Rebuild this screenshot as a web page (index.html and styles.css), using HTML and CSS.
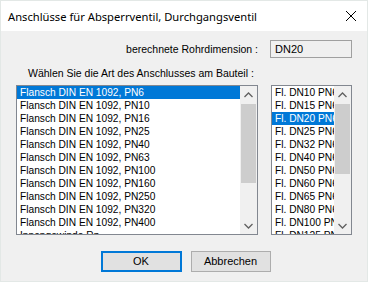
FILE: index.html
```html
<!DOCTYPE HTML>
<html lang="de">
<head>
    <meta charset="utf-8" />
    <title>Anschlüsse für Absperrventil, Durchgangsventil</title>
    <link rel="stylesheet" href="styles.css">
</head>
<body>
    <div class="window">
        <div class="titlebar">
            <span class="title">Anschlüsse für Absperrventil, Durchgangsventil</span>
            <svg class="close" width="12" height="12" viewBox="0 0 12 12">
                <path d="M1 1 L11 11 M11 1 L1 11" stroke="#000" stroke-width="1" fill="none" />
            </svg>
        </div>
        <div class="dialog">
            <div class="dim-row">
                <span class="label">berechnete Rohrdimension :</span>
                <div class="readonly">DN20</div>
            </div>
            <div class="choose">Wählen Sie die Art des Anschlusses am Bauteil :</div>
            <div class="lists">
                <div class="listbox wide">
                    <div class="items">
                        <div class="item selected">Flansch DIN EN 1092, PN6</div>
                        <div class="item">Flansch DIN EN 1092, PN10</div>
                        <div class="item">Flansch DIN EN 1092, PN16</div>
                        <div class="item">Flansch DIN EN 1092, PN25</div>
                        <div class="item">Flansch DIN EN 1092, PN40</div>
                        <div class="item">Flansch DIN EN 1092, PN63</div>
                        <div class="item">Flansch DIN EN 1092, PN100</div>
                        <div class="item">Flansch DIN EN 1092, PN160</div>
                        <div class="item">Flansch DIN EN 1092, PN250</div>
                        <div class="item">Flansch DIN EN 1092, PN320</div>
                        <div class="item">Flansch DIN EN 1092, PN400</div>
                        <div class="item">Innengewinde Rp</div>
                    </div>
                    <div class="scrollbar">
                        <div class="arrow">
                            <svg width="9" height="6" viewBox="0 0 9 6"><path d="M0.5 5 L4.5 1 L8.5 5" stroke="#606060" stroke-width="1.3" fill="none" /></svg>
                        </div>
                        <div class="track">
                            <div class="thumb left-thumb"></div>
                        </div>
                        <div class="arrow">
                            <svg width="9" height="6" viewBox="0 0 9 6"><path d="M0.5 1 L4.5 5 L8.5 1" stroke="#606060" stroke-width="1.3" fill="none" /></svg>
                        </div>
                    </div>
                </div>
                <div class="listbox narrow">
                    <div class="items">
                        <div class="item">Fl. DN10 PN6</div>
                        <div class="item">Fl. DN15 PN6</div>
                        <div class="item selected">Fl. DN20 PN6</div>
                        <div class="item">Fl. DN25 PN6</div>
                        <div class="item">Fl. DN32 PN6</div>
                        <div class="item">Fl. DN40 PN6</div>
                        <div class="item">Fl. DN50 PN6</div>
                        <div class="item">Fl. DN60 PN6</div>
                        <div class="item">Fl. DN65 PN6</div>
                        <div class="item">Fl. DN80 PN6</div>
                        <div class="item">Fl. DN100 PN6</div>
                        <div class="item">Fl. DN125 PN6</div>
                    </div>
                    <div class="scrollbar">
                        <div class="arrow">
                            <svg width="9" height="6" viewBox="0 0 9 6"><path d="M0.5 5 L4.5 1 L8.5 5" stroke="#606060" stroke-width="1.3" fill="none" /></svg>
                        </div>
                        <div class="track">
                            <div class="thumb right-thumb"></div>
                        </div>
                        <div class="arrow">
                            <svg width="9" height="6" viewBox="0 0 9 6"><path d="M0.5 1 L4.5 5 L8.5 1" stroke="#606060" stroke-width="1.3" fill="none" /></svg>
                        </div>
                    </div>
                </div>
            </div>
            <div class="buttons">
                <div class="button default">OK</div>
                <div class="button">Abbrechen</div>
            </div>
        </div>
    </div>
</body>
</html>
```

FILE: styles.css
```css
html, body {
    margin: 0;
    padding: 0;
}

body {
    width: 368px;
    height: 282px;
    overflow: hidden;
    background: #ffffff;
}

.window {
    width: 368px;
    height: 282px;
    box-sizing: border-box;
    border: 1px solid #e3e8e6;
    background: #f0f0f0;
    display: flex;
    flex-direction: column;
}

.titlebar {
    height: 30px;
    background: #ffffff;
    display: flex;
    align-items: center;
    justify-content: space-between;
    padding: 0 10px 0 7px;
}

.title {
    font-family: "Noto Sans", sans-serif;
    font-size: 11.2px;
    color: #000000;
}

.close {
    display: block;
}

.dialog {
    flex: 1;
    padding: 9px 15px 0 15px;
    font-family: "Liberation Sans", Arial, sans-serif;
    font-size: 10.5px;
    color: #000000;
}

.dim-row {
    display: flex;
    justify-content: flex-end;
    align-items: center;
    height: 18px;
}

.dim-row .label {
    margin-right: 12px;
}

.readonly {
    width: 82px;
    height: 18px;
    box-sizing: border-box;
    border: 1px solid #a0a0a0;
    padding: 0 4px;
    line-height: 16px;
    font-size: 11px;
    background: #f0f0f0;
}

.choose {
    margin-top: 8px;
    padding-left: 12px;
    line-height: 14px;
}

.lists {
    display: flex;
    justify-content: space-between;
    margin-top: 5px;
    height: 150px;
}

.listbox {
    box-sizing: border-box;
    height: 150px;
    border: 1px solid #828790;
    background: #ffffff;
    display: flex;
}

.wide {
    width: 242px;
}

.narrow {
    width: 81px;
}

.items {
    flex: 1;
    overflow: hidden;
    min-width: 0;
    font-size: 10.2px;
}

.item {
    height: 13px;
    line-height: 13px;
    padding-left: 3px;
    white-space: nowrap;
    overflow: hidden;
}

.item.selected {
    background: #0078d7;
    color: #ffffff;
}

.scrollbar {
    width: 17px;
    background: #f0f0f0;
    display: flex;
    flex-direction: column;
}

.arrow {
    height: 17px;
    display: flex;
    align-items: center;
    justify-content: center;
}

.arrow svg {
    display: block;
}

.track {
    flex: 1;
    padding-top: 1px;
}

.thumb {
    background: #cdcdcd;
    margin: 0 1px;
}

.left-thumb {
    height: 79px;
}

.right-thumb {
    height: 70px;
}

.buttons {
    display: flex;
    justify-content: center;
    gap: 9px;
    margin-top: 16px;
    padding-left: 3px;
    font-size: 11px;
}

.button {
    box-sizing: border-box;
    width: 80px;
    height: 21px;
    border: 1px solid #adadad;
    background: #e1e1e1;
    text-align: center;
    line-height: 19px;
}

.button.default {
    width: 81px;
    border: 2px solid #0078d7;
    line-height: 17px;
}
```
